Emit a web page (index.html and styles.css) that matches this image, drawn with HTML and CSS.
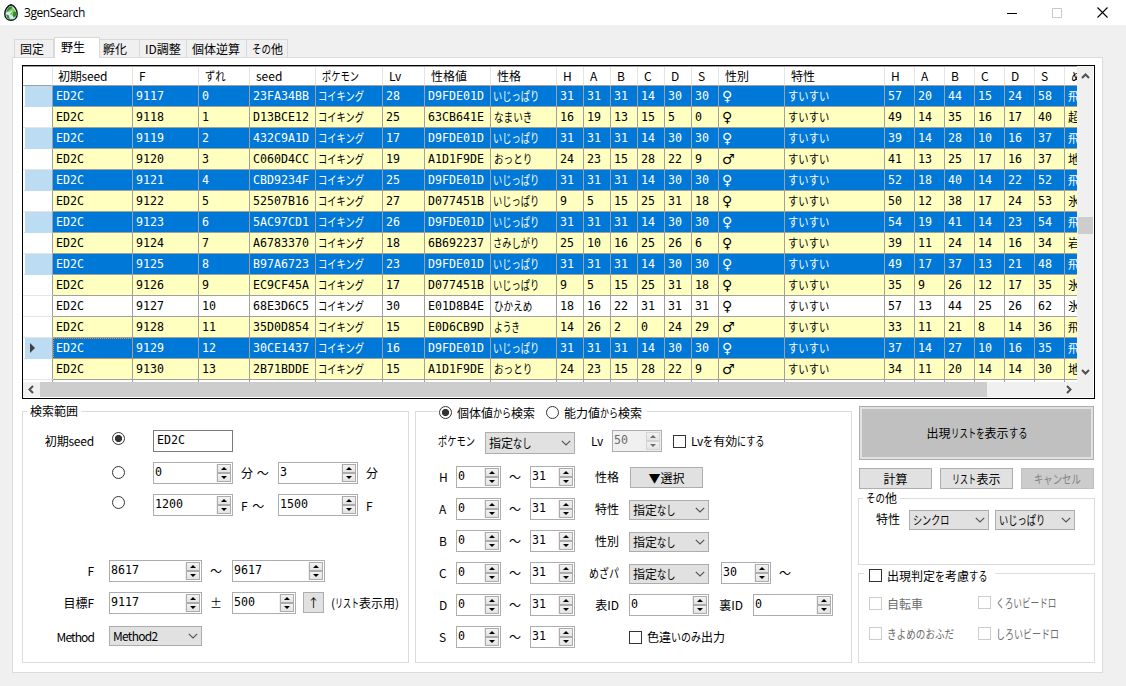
FILE: index.html
```html
<!DOCTYPE html>
<html lang="ja">
<head>
  <meta charset="UTF-8">
  <title>3genSearch</title>
  <link rel="stylesheet" href="styles.css">
</head>
<body>
  <div class="titlebar">
    <svg class="app-icon" width="14" height="17" viewBox="0 0 14 17">
      <path d="M7 .8C3.500 1.600.8 6 .8 10c0 3.800 2.700 6.200 6.200 6.200s6.200-2.400 6.200-6.200C13.200 6 10.500 1.600 7 .8z" fill="#d3ecf0" stroke="#111" stroke-width="1.400"/>
      <path d="M4 3.500L7.500 2l1 2-3.500 3-3 1.500zM9.500 7l3 1v4l-3 1.500-1-3zM2 10.500l2.500.5 1.500 4.300-2.500-1z" fill="#2f8f35"/>
      <path d="M4.500 7.500l4-2.500 1.500 1.500-3 3.500 2 1" fill="none" stroke="#7cc63f" stroke-width="1.500"/>
    </svg>
    <span class="app-name">3genSearch</span>
    <div class="window-buttons">
      <svg width="10" height="10" viewBox="0 0 10 10"><path d="M0 5.500h10" stroke="#000"/></svg>
      <svg width="10" height="10" viewBox="0 0 10 10"><path d="M.5.5h9v9h-9z" fill="none" stroke="#c8c8c8"/></svg>
      <svg width="11" height="11" viewBox="0 0 11 11"><path d="M.5.5l10 10M10.500.5l-10 10" stroke="#000" stroke-width="1.100"/></svg>
    </div>
  </div>

  <div class="main">
    <div class="tabs">
      <div class="tab tab-1">固定</div>
      <div class="tab tab-2 active">野生</div>
      <div class="tab tab-3">孵化</div>
      <div class="tab tab-4">ID調整</div>
      <div class="tab tab-5">個体逆算</div>
      <div class="tab tab-6"><span class="kana k2o">その</span>他</div>
    </div>

    <div class="page">
      <div class="grid-box">
        <div class="grid-view">
          <table class="grid">
            <colgroup id="cols"></colgroup>
            <thead><tr id="head"></tr></thead>
            <tbody id="rows"></tbody>
          </table>
        </div>
        <div class="vscroll">
          <svg class="up" width="9" height="6" viewBox="0 0 9 6"><path d="M1 5l3.500-3.500L8 5" fill="none" stroke="#505050" stroke-width="2"/></svg>
          <div class="vthumb"></div>
          <svg class="down" width="9" height="6" viewBox="0 0 9 6"><path d="M1 1l3.500 3.500L8 1" fill="none" stroke="#505050" stroke-width="2"/></svg>
        </div>
        <div class="hscroll">
          <svg class="left" width="6" height="9" viewBox="0 0 6 9"><path d="M5 1L1.500 4.500 5 8" fill="none" stroke="#505050" stroke-width="2"/></svg>
          <div class="hthumb"></div>
          <svg class="right" width="6" height="9" viewBox="0 0 6 9"><path d="M1 1l3.500 3.500L1 8" fill="none" stroke="#505050" stroke-width="2"/></svg>
        </div>
      </div>

      <div class="panels">
        <!-- 検索範囲 -->
        <div class="group range">
          <div class="legend">検索範囲</div>
          <div class="row">
            <span class="label seed">初期seed</span>
            <span class="radio checked up2"></span>
            <span class="textbox">ED2C</span>
          </div>
          <div class="row">
            <span class="label"></span>
            <span class="radio"></span>
            <span class="spin w80">0</span>
            <span class="unit">分 ～</span>
            <span class="spin w80">3</span>
            <span class="unit">分</span>
          </div>
          <div class="row">
            <span class="label"></span>
            <span class="radio up2"></span>
            <span class="spin w80">1200</span>
            <span class="unit low">F ～</span>
            <span class="spin w80">1500</span>
            <span class="unit low">F</span>
          </div>
          <div class="row frame">
            <span class="label">F</span>
            <span class="spin w93 first">8617</span>
            <span class="tilde wide">～</span>
            <span class="spin w93">9617</span>
          </div>
          <div class="row">
            <span class="label">目標F</span>
            <span class="spin w93 first">9117</span>
            <span class="tilde wide">±</span>
            <span class="spin w64">500</span>
            <span class="button arrow">↑</span>
            <span class="note">(<span class="kana k3">リスト</span>表示用)</span>
          </div>
          <div class="row method">
            <span class="label latin">Method</span>
            <span class="combo w93 first latin">Method2</span>
          </div>
        </div>

        <!-- 個体値 -->
        <div class="group stats">
          <div class="legend">
            <span class="radio checked"></span><span class="radio-text">個体値<span class="kana k2">から</span>検索</span>
            <span class="radio second"></span><span class="radio-text">能力値<span class="kana k2">から</span>検索</span>
          </div>
          <div class="row top">
            <span class="name"><span class="kana k4">ポケモン</span></span>
            <span class="combo w90">指定<span class="kana k2n">なし</span></span>
            <span class="lv">Lv</span>
            <span class="spin w50 off">50</span>
            <span class="check"></span>
            <span class="check-text">Lv<span class="kana k1">を</span>有効<span class="kana k3w">にする</span></span>
          </div>
          <div class="columns">
            <div class="ivs" id="ivs"></div>
            <div class="filters">
              <div class="row"><span class="label">性格</span><span class="button select">▼選択</span></div>
              <div class="row"><span class="label">特性</span><span class="combo w80">指定<span class="kana k2n">なし</span></span></div>
              <div class="row"><span class="label">性別</span><span class="combo w80">指定<span class="kana k2n">なし</span></span></div>
              <div class="row"><span class="label"><span class="kana k3m">めざパ</span></span><span class="combo w80">指定<span class="kana k2n">なし</span></span><span class="spin w50 power">30</span><span class="tilde">～</span></div>
              <div class="row"><span class="label">表ID</span><span class="spin w80">0</span><span class="label sid">裏ID</span><span class="spin w80">0</span></div>
              <div class="row"><span class="label"></span><span class="check"></span><span class="check-text">色違<span class="kana k3i">いのみ</span>出力</span></div>
            </div>
          </div>
        </div>

        <div class="side">
          <div class="big-button">出現<span class="kana k4r">リストを</span>表示<span class="kana k2n">する</span></div>
          <div class="buttons">
            <span class="button">計算</span>
            <span class="button"><span class="kana k3">リスト</span>表示</span>
            <span class="button disabled"><span class="kana k5c">キャンセル</span></span>
          </div>
          <div class="group other">
            <div class="legend"><span class="kana k2o">その</span>他</div>
            <div class="row">
              <span>特性</span>
              <span class="combo w80"><span class="kana k4s">シンクロ</span></span>
              <span class="combo w80"><span class="kana k5">いじっぱり</span></span>
            </div>
          </div>
          <div class="group judge">
            <div class="legend"><span class="check"></span><span class="check-text">出現判定<span class="kana k1">を</span>考慮<span class="kana k2n">する</span></span></div>
            <div class="options">
              <div class="opt"><span class="check"></span><span class="check-text">自転車</span></div>
              <div class="opt up1"><span class="check"></span><span class="check-text"><span class="kana k7">くろいビードロ</span></span></div>
              <div class="opt"><span class="check"></span><span class="check-text"><span class="kana k7o">きよめのおふだ</span></span></div>
              <div class="opt"><span class="check"></span><span class="check-text"><span class="kana k7s">しろいビードロ</span></span></div>
            </div>
          </div>
        </div>
      </div>
    </div>
  </div>

  <script>
    const widths = [30, 80, 66, 51, 66, 67, 42, 66, 66, 27, 27, 27, 27, 27, 27, 66, 100, 30, 30, 30, 30, 30, 30, 30];
    const heads = ['', '初期seed', 'F', '<span class="kana h2">ずれ</span>', 'seed', '<span class="kana k4">ポケモン</span>', 'Lv', '性格値', '性格',
      'H', 'A', 'B', 'C', 'D', 'S', '性別', '特性', 'H', 'A', 'B', 'C', 'D', 'S', 'め'];
    const data = [
      '23FA34BB 28 D9FDE01D いじっぱり 31 31 31 14 30 30 ♀ 57 20 44 15 24 58 飛',
      'D13BCE12 25 63CB641E なまいき 16 19 13 15 5 0 ♀ 49 14 35 16 17 40 超',
      '432C9A1D 17 D9FDE01D いじっぱり 31 31 31 14 30 30 ♀ 39 14 28 10 16 37 飛',
      'C060D4CC 19 A1D1F9DE おっとり 24 23 15 28 22 9 ♂ 41 13 25 17 16 37 地',
      'CBD9234F 25 D9FDE01D いじっぱり 31 31 31 14 30 30 ♀ 52 18 40 14 22 52 飛',
      '52507B16 27 D077451B いじっぱり 9 5 15 25 31 18 ♀ 50 12 38 17 24 53 氷',
      '5AC97CD1 26 D9FDE01D いじっぱり 31 31 31 14 30 30 ♀ 54 19 41 14 23 54 飛',
      'A6783370 18 6B692237 さみしがり 25 10 16 25 26 6 ♀ 39 11 24 14 16 34 岩',
      'B97A6723 23 D9FDE01D いじっぱり 31 31 31 14 30 30 ♀ 49 17 37 13 21 48 飛',
      'EC9CF45A 17 D077451B いじっぱり 9 5 15 25 31 18 ♀ 35 9 26 12 17 35 氷',
      '68E3D6C5 30 E01D8B4E ひかえめ 18 16 22 31 31 31 ♀ 57 13 44 25 26 62 氷',
      '35D0D854 15 E0D6CB9D ようき 14 26 2 0 24 29 ♂ 33 11 21 8 14 36 飛',
      '30CE1437 16 D9FDE01D いじっぱり 31 31 31 14 30 30 ♀ 37 14 27 10 16 35 飛',
      '2B71BDDE 15 A1D1F9DE おっとり 24 23 15 28 22 9 ♂ 34 11 20 14 14 30 地'
    ];
    const kana = (t, n) => `<span class="kana ${n}">${t}</span>`;

    document.getElementById('cols').innerHTML = widths.map(w => `<col style="width:${w}px">`).join('');
    document.getElementById('head').innerHTML = heads.map(h => `<th>${h}</th>`).join('');

    let html = '';
    data.forEach((line, i) => {
      const d = line.split(' ');
      const selected = d[2] === 'D9FDE01D';
      const cls = selected ? 'selected' : (i === 10 ? 'plain' : '');
      const current = i === 12;
      const cells = ['ED2C', 9117 + i, i, d[0], kana('コイキング', 'k5'), d[1], d[2], kana(d[3], 'k' + d[3].length + 'd'),
        ...d.slice(4, 10), `<span class="sex">${d[10]}</span>`, kana('すいすい', 'k4w'), ...d.slice(11)];
      html += `<tr class="${cls}${current ? ' current' : ''}"><td class="rowhead">${current ? '<i class="pointer"></i>' : ''}</td>`
        + cells.map(c => `<td>${c}</td>`).join('') + '</tr>';
    });
    html += '<tr class="plain"><td class="rowhead"></td>' + '<td></td>'.repeat(23) + '</tr>';
    document.getElementById('rows').innerHTML = html;

    document.getElementById('ivs').innerHTML = ['H', 'A', 'B', 'C', 'D', 'S'].map(s =>
      `<div class="row"><span class="stat">${s}</span><span class="spin w45">0</span><span class="tilde">～</span><span class="spin w45">31</span></div>`
    ).join('');

    // up / down buttons of every numeric box
    document.querySelectorAll('.spin').forEach(s => {
      s.innerHTML = `<span class="num">${s.textContent}</span><span class="updown"><i class="inc"></i><i class="dec"></i></span>`;
    });
    document.querySelectorAll('.combo').forEach(c => {
      c.innerHTML = `<span class="value">${c.innerHTML}</span><svg width="10" height="6" viewBox="0 0 10 6"><path d="M.8.8L5 5 9.200.8" fill="none" stroke="#555" stroke-width="1.200"/></svg>`;
    });
  </script>
</body>
</html>
```
FILE: styles.css
```css
* {
  box-sizing: border-box;
}
body {
  margin: 0;
  width: 1126px;
  height: 686px;
  overflow: hidden;
  background: #f0f0f0;
  color: #000;
  font: 12px/14px "Noto Sans CJK JP", sans-serif;
  white-space: nowrap;
}
.titlebar {
  display: flex;
  align-items: center;
  height: 25px;
  padding-left: 4px;
  background: #fff;
}
.app-name {
  margin-left: 6px;
  font: 12px/16px "Open Sans", sans-serif;
  letter-spacing: -0.45px;
}
.window-buttons {
  display: flex;
  align-items: center;
  gap: 35px;
  margin-left: auto;
  padding-right: 18px;
}
.main {
  padding: 12px 0 0 12px;
}
.tabs {
  display: flex;
  align-items: flex-end;
  height: 20px;
  padding-left: 2px;
}
.tab {
  height: 18px;
  padding: 2px 0 0 5px;
  border: 1px solid #d9d9d9;
  border-width: 1px 1px 0 0;
  background: #f0f0f0;
}
.tab-1 { width: 40px; border-left-width: 1px; }
.tab-2 { width: 46px; }
.tab-3 { width: 40px; padding-left: 3px; }
.tab-4 { width: 47px; }
.tab-5 { width: 60px; }
.tab-6 { width: 41px; }
.tab.active {
  position: relative;
  height: 21px;
  margin-bottom: -1px;
  padding-left: 6px;
  border-left-width: 1px;
  background: #fff;
}
.page {
  width: 1091px;
  height: 616px;
  padding: 7px 0 0 9px;
  border: 1px solid #dcdcdc;
  background: #fff;
}

/* kana are narrower than kanji */
.kana {
  display: inline-block;
  transform-origin: 0 50%;
  transform: scaleX(0.77);
}
.k5 { width: 46px; }
.k5d { width: 46px; }
.k4d { transform: scaleX(0.8); }
.k3d { transform: scaleX(0.72); }
.k4 { width: 37px; }
.k4w { transform: scaleX(0.86); }
.k4s { transform: scaleX(0.76); }
.k3 { width: 24px; transform: scaleX(0.67); }
.k3m { width: 30px; transform: scaleX(0.83); }
.k3i { width: 30px; transform: scaleX(0.83); }
.k3w { width: 27px; transform: scaleX(0.76); }
.k2 { width: 18px; transform: scaleX(0.75); }
.k2n { width: 18px; transform: scaleX(0.77); }
.k2o { width: 19px; transform: scaleX(0.79); }
.h2 { transform: scaleX(0.86); }
.k1 { width: 10px; transform: scaleX(0.83); }
.k4r { width: 34px; transform: scaleX(0.7); }
.k5c { width: 47px; transform: scaleX(0.78); }
.k7 { transform: scaleX(0.72); }
.k7o { transform: scaleX(0.8); }
.k7s { transform: scaleX(0.75); }

.grid-box {
  display: grid;
  grid-template: 316px 15px / 1054px 16px;
  width: 1073px;
  height: 334px;
  border: 1px solid #000;
}
.grid-view {
  overflow: hidden;
  border-top: 1px solid #a0a0a0;
}
.grid {
  width: 1072px;
  table-layout: fixed;
  border-collapse: separate;
  border-spacing: 0;
}
.grid th {
  height: 19px;
  padding: 0 0 1px 6px;
  border-right: 1px solid #e5e5e5;
  border-bottom: 1px solid #a0a0a0;
  font-weight: normal;
  text-align: left;
  line-height: 14px;
}
.grid th:nth-child(2) {
  padding-left: 5px;
  letter-spacing: -0.2px;
}
.grid td {
  height: 21px;
  padding: 0 0 0 3px;
  border-right: 1px solid #a0a0a0;
  border-bottom: 1px solid #a0a0a0;
  background: #ffffc0;
  font: 11.63px/14px "DejaVu Sans Mono", "Noto Sans CJK JP", monospace;
}
.grid td:last-child {
  font: 12px/14px "Noto Sans CJK JP", sans-serif;
}
.grid td .kana {
  font: 12px/14px "Noto Sans CJK JP", sans-serif;
  vertical-align: top;
}
.grid td .kana.k5,
.grid td .kana.k5d {
  margin-left: -1px;
}
.sex {
  display: inline-block;
  font: 14px/14px "DejaVu Sans", sans-serif;
  vertical-align: top;
}
.grid .plain td {
  background: #fff;
}
.grid .selected td {
  background: #0078d7;
  color: #fff;
}
.grid td.rowhead,
.grid .plain td.rowhead {
  border-bottom-color: #e5e5e5;
  background: #fff;
}
.grid .selected td.rowhead {
  border-bottom-color: #bcdcf4;
  border-left: 2px solid #fff;
  background: #bcdcf4;
}
.grid .current td:nth-child(2) {
  outline: 1px dotted #f08728;
  outline-offset: -1px;
}
.pointer {
  display: block;
  width: 0;
  margin-left: 2px;
  border: 5px solid transparent;
  border-left-color: #404040;
  border-right: 0;
}
.vscroll {
  display: flex;
  flex-direction: column;
  align-items: center;
  background: #f0f0f0;
}
.vscroll .up { margin-top: 7px; }
.vthumb {
  width: 15px;
  height: 17px;
  margin: 138px 0 135px;
  background: #cdcdcd;
}
.hscroll {
  grid-column: 1 / 3;
  display: flex;
  align-items: center;
  padding-left: 5px;
  background: #f0f0f0;
}
.hthumb {
  width: 947px;
  height: 15px;
  margin: 0 79px 0 6px;
  background: #cdcdcd;
}

.panels {
  display: flex;
}
.group {
  border: 1px solid #dcdcdc;
}
.row {
  display: flex;
  height: 22px;
  margin-bottom: 10px;
  line-height: 22px;
}
.legend {
  width: max-content;
  height: 14px;
  padding: 0 3px;
  background: #fff;
}
.range {
  width: 387px;
  height: 252px;
  margin: 12px 6px 0 0;
}
.range .legend {
  margin: -8px 0 12px 4px;
}
.label {
  width: 71px;
  text-align: right;
}
.label.seed {
  letter-spacing: -0.2px;
}
.label.latin {
  letter-spacing: -0.9px;
}
.combo.latin {
  letter-spacing: -0.7px;
}
.radio {
  flex: none;
  width: 13px;
  height: 13px;
  border: 1px solid #333;
  border-radius: 50%;
  background: #fff;
}
.radio.checked {
  background: radial-gradient(circle, #333 3.2px, #fff 4px);
}
.range .radio {
  margin: 4px 28px 0 18px;
}
.range .radio.up2 {
  margin-top: 2px;
}
.textbox {
  width: 80px;
  height: 22px;
  padding-left: 3px;
  border: 1px solid #7a7a7a;
  font: 11.63px/19px "DejaVu Sans Mono", monospace;
}
.spin {
  display: flex;
  flex: none;
  justify-content: space-between;
  height: 22px;
  padding: 1px;
  border: 1px solid #abadb3;
}
.num {
  font: 11.63px/17px "DejaVu Sans Mono", monospace;
}
.updown {
  width: 15px;
  padding-left: 1px;
  background: #f0f0f0;
}
.updown i {
  display: flex;
  align-items: center;
  justify-content: center;
  width: 14px;
  height: 9px;
  border: 1px solid #acacac;
  background: linear-gradient(#f2f2f2, #e4e4e4);
}
.updown i::before {
  content: "";
  border: 3px solid transparent;
}
.updown .inc::before {
  border-top: 0;
  border-bottom-color: #000;
}
.updown .dec::before {
  border-bottom: 0;
  border-top-color: #000;
}
.spin.off {
  background: #f0f0f0;
  color: #6d6d6d;
}
.off .updown i {
  border-color: #d4d4d4;
}
.off .inc::before { border-bottom-color: #6d6d6d; }
.off .dec::before { border-top-color: #6d6d6d; }
.w45 { width: 45px; }
.w50 { width: 50px; }
.w64 { width: 64px; }
.w80 { width: 80px; }
.w90 { width: 90px; }
.w93 { width: 93px; }
.first { margin-left: 15px; }
.unit {
  width: 45px;
  padding-left: 8px;
  word-spacing: 1px;
}
.unit.low {
  line-height: 24px;
  word-spacing: 2px;
}
.tilde {
  width: 29px;
  padding-left: 8px;
}
.tilde.wide {
  width: 30px;
}
.row.frame {
  margin-top: 44px;
}
.note {
  margin-left: 7px;
}
.row.method {
  margin-top: 12px;
}
.combo {
  display: flex;
  flex: none;
  align-items: center;
  justify-content: space-between;
  height: 20px;
  padding: 0 3px 0 3px;
  border: 1px solid #adadad;
  background: #e1e1e1;
  line-height: 16px;
}
.button {
  width: 73px;
  height: 21px;
  border: 1px solid #adadad;
  background: #e1e1e1;
  line-height: 19px;
  text-align: center;
}
.button.arrow {
  width: 21px;
  margin-left: 7px;
}
.button.disabled {
  border-color: #bfbfbf;
  background: #ccc;
  color: #838383;
}

.stats {
  width: 437px;
  height: 252px;
  margin: 12px 6px 0 0;
}
.stats .legend {
  display: flex;
  margin: -6px 0 0 22px;
  padding: 0 5px 0 1px;
}
.radio-text {
  margin-left: 5px;
}
.radio.second {
  margin-left: 11px;
}
.row.top {
  height: 24px;
  margin: 10px 0 12px;
}
.name {
  width: 69px;
  padding-left: 22px;
}
.top .combo {
  height: 22px;
  margin-top: 2px;
}
.lv {
  width: 37px;
  padding-left: 16px;
}
.check {
  flex: none;
  width: 13px;
  height: 13px;
  border: 1px solid #333;
  background: #fff;
}
.check-text {
  margin-left: 5px;
}
.top .check {
  margin: 5px 0 0 11px;
}
.columns {
  display: flex;
}
.stat {
  width: 40px;
  padding-left: 23px;
}
.filters .label {
  width: 54px;
  padding-right: 10px;
}
.filters .combo {
  margin-top: 2px;
}
.filters .select {
  margin: 1px 0 0 1px;
}
.filters .power {
  margin-left: 12px;
}
.filters .label.sid {
  width: 44px;
}
.filters .check {
  margin-top: 5px;
}

.side {
  width: 236px;
  padding: 7px 0 0 0;
}
.big-button {
  width: 235px;
  height: 54px;
  margin-left: 1px;
  border: 1px solid #adadad;
  box-shadow: inset 0 0 0 2px #e1e1e1;
  background: #c0c0c0;
  line-height: 52px;
  text-align: center;
}
.buttons {
  display: flex;
  gap: 8px;
  margin: 8px 0 9px 1px;
}
.other {
  width: 237px;
  height: 67px;
}
.other .legend {
  margin: -8px 0 5px 4px;
}
.other .row {
  padding-left: 17px;
  line-height: 18px;
}
.other .combo:nth-child(2) {
  margin: 0 6px 0 9px;
}
.judge {
  width: 237px;
  height: 90px;
  margin-top: 8px;
}
.judge .legend {
  display: flex;
  margin: -5px 0 0 5px;
  padding: 0 8px 0 5px;
}
.options {
  display: grid;
  grid-template-columns: 109px auto;
  row-gap: 16px;
  padding: 14px 0 0 10px;
}
.opt {
  display: flex;
  height: 14px;
  color: #6d6d6d;
}
.opt.up1 {
  margin-top: -1px;
}
.opt .check {
  border-color: #ccc;
}
```
